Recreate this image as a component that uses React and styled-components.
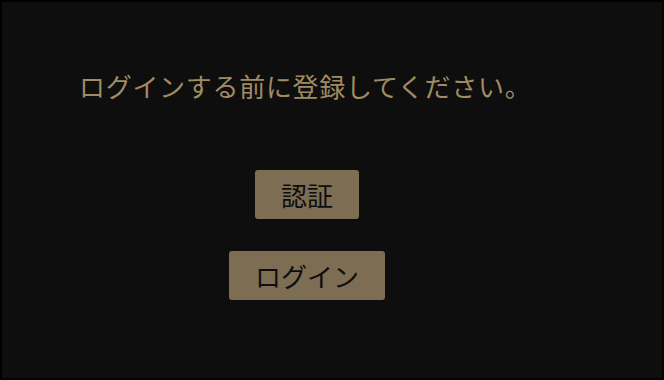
import React from 'react';
import styled, { createGlobalStyle } from 'styled-components';

const Global = createGlobalStyle`
  html, body {
    margin: 0;
    padding: 0;
    background: #0e0e0e;
  }
  * { box-sizing: border-box; }
`;

const Page = styled.div`
  width: 664px;
  height: 380px;
  border: 2px solid #000;
  background: #0e0e0e;
  font-family: "Noto Sans CJK JP", "Noto Sans", sans-serif;
  padding-top: 65px;
`;

const Message = styled.p`
  margin: 0;
  padding-left: 77px;
  font-size: 26px;
  line-height: 38px;
  letter-spacing: 0.7px;
  color: #a08b64;
`;

const Actions = styled.div`
  display: flex;
  flex-direction: column;
  align-items: center;
  gap: 32px;
  margin-top: 65px;
  padding-right: 50px;
`;

const Button = styled.button`
  height: 49px;
  padding: 0 26px;
  border: none;
  border-radius: 3px;
  background: #7d6d52;
  color: #0e0e0e;
  font-family: inherit;
  font-size: 26px;
  line-height: 1;
  cursor: pointer;
`;

export default function App() {
  return (
    <Page>
      <Global />
      <Message>ログインする前に登録してください。</Message>
      <Actions>
        <Button type="button">認証</Button>
        <Button type="button">ログイン</Button>
      </Actions>
    </Page>
  );
}
